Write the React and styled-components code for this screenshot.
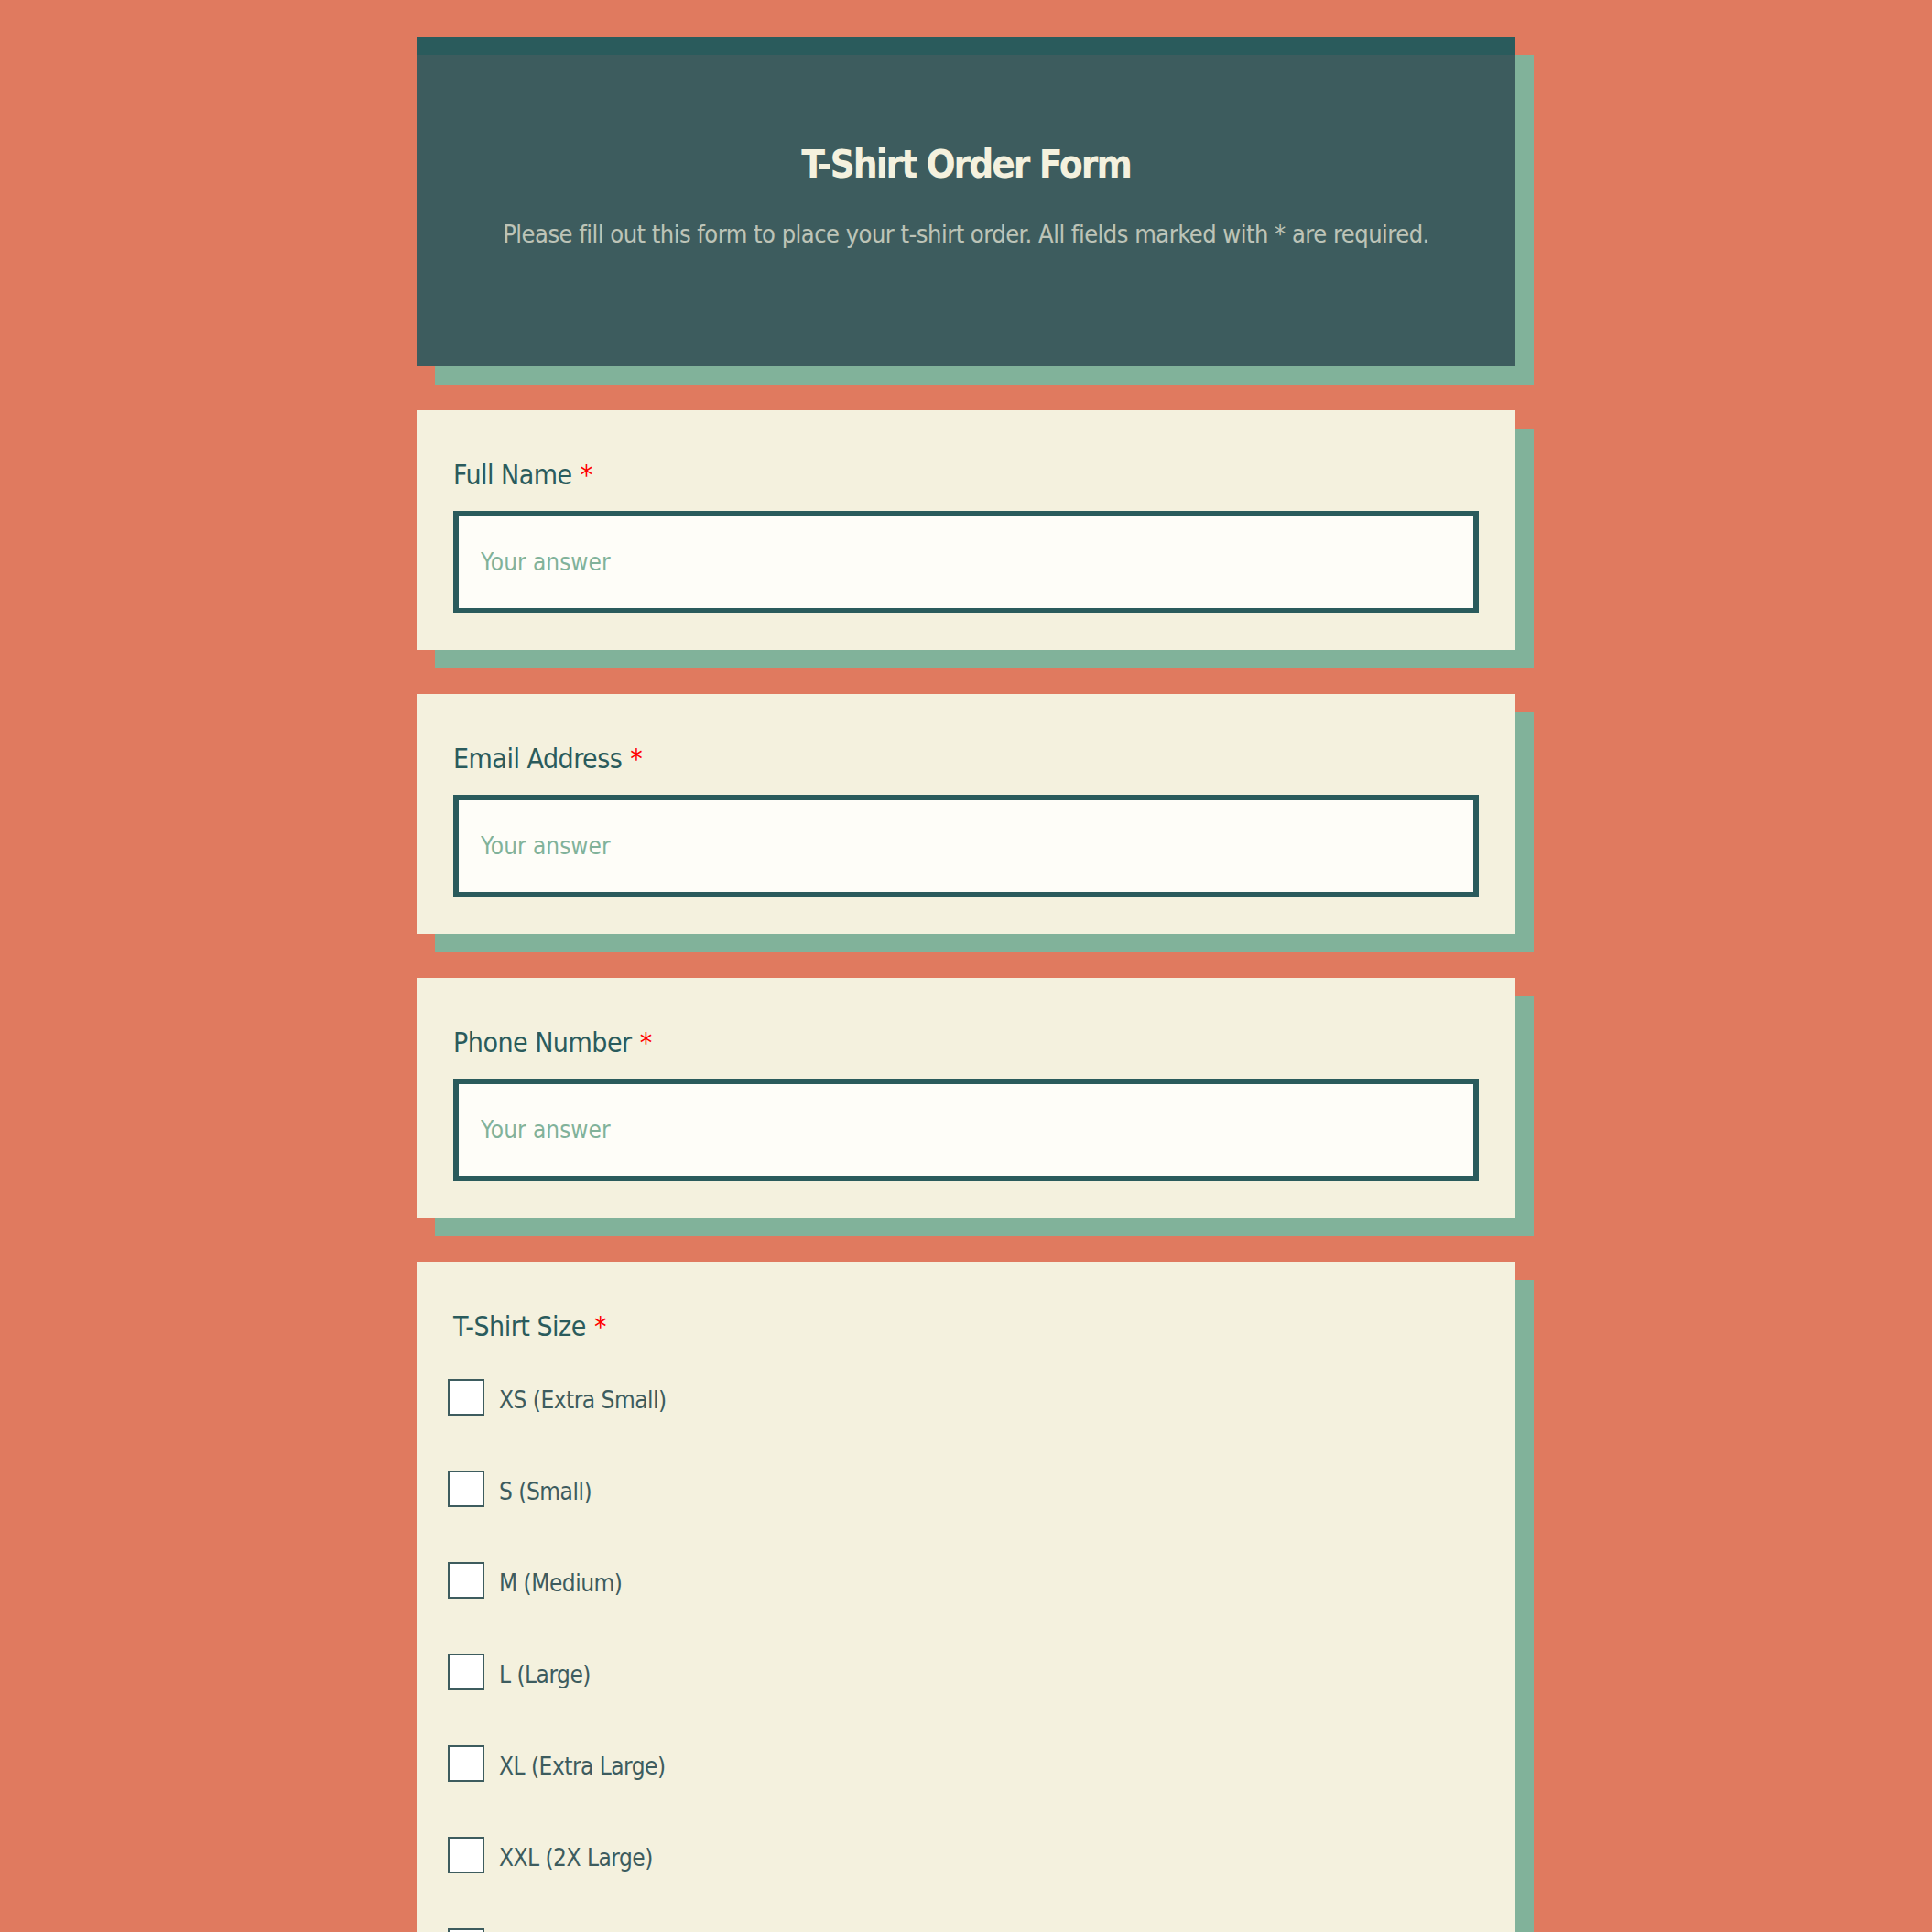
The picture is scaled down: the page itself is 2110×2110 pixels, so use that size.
import React, { useState } from "react";
import styled, { createGlobalStyle } from "styled-components";

const GlobalStyle = createGlobalStyle`
    body {
        margin:0;
        background-color:#e07a5f;
        font-family:"Liberation Sans Narrow", "DejaVu Sans Condensed", "DejaVu Sans", sans-serif;
    }
    * {
        box-sizing:border-box;
    }
`

const Page = styled.div`
    padding:40px 0 80px;
`

const Container = styled.div`
    display:flex;
    flex-direction:column;
    gap:48px;

    width:1200px;
    margin:0 auto;
`

const Header = styled.header`
    height:360px;
    padding:95px 40px 0;

    text-align:center;
    background-color:#3d5c5e;
    border-top:20px solid #2a5b5c;
    box-shadow:20px 20px 0 #81b29a;
`

const Title = styled.h1`
    margin:0;

    font-size:42px;
    line-height:1.2;
    font-weight:700;
    letter-spacing:-2px;
    color:#f4f1de;
`

const SubText = styled.p`
    margin:33px 0 0;

    font-size:27px;
    line-height:1.3;
    letter-spacing:-0.5px;
    white-space:nowrap;
    color:#f4f1de;
    opacity:0.7;
`

const Card = styled.section`
    padding:47px 40px 40px;

    background-color:#f4f1de;
    box-shadow:20px 20px 0 #81b29a;
`

const Label = styled.label`
    display:block;

    font-size:30px;
    line-height:48px;
    letter-spacing:-0.5px;
    color:#2a5b5c;
`

const Star = styled.span`
    margin-left:9px;
    color:#ff0000;
`

const Input = styled.input`
    display:block;
    width:100%;
    height:112px;
    margin-top:15px;
    padding:0 24px;

    font-family:inherit;
    font-size:26px;
    color:#2a5b5c;
    background-color:#fefdf8;
    border:6px solid #2a5b5c;
    border-radius:0;
    outline:none;

    &::placeholder {
        color:#81b29a;
    }
`

const OptionList = styled.div`
    display:flex;
    flex-direction:column;
    gap:60px;

    margin:33px 0 0 -6px;
`

const Option = styled.label`
    display:flex;
    align-items:flex-start;
    gap:16px;
    height:40px;

    font-size:26px;
    line-height:40px;
    letter-spacing:-0.5px;
    color:#3d5c5e;
    cursor:pointer;
`

const Box = styled.span`
    flex-shrink:0;

    width:40px;
    height:40px;

    background-color:${(props) => (props.checked ? "#3d5c5e" : "#ffffff")};
    border:2px solid #3d5c5e;
`

const OptionText = styled.span`
    padding-top:3px;
`

const HiddenCheck = styled.input`
    display:none;
`

const sizes = [
    "XS (Extra Small)",
    "S (Small)",
    "M (Medium)",
    "L (Large)",
    "XL (Extra Large)",
    "XXL (2X Large)",
    "XXXL (3X Large)",
];

function TextField({ label, type }) {
    return (
        <Card>
            <Label>
                {label}<Star>*</Star>
            </Label>
            <Input type={type} placeholder="Your answer" />
        </Card>
    )
}

function App() {

    const [picked, setPicked] = useState([]);

    const toggle = (size) => {
        return () => {
            setPicked(picked.includes(size) ? picked.filter((s) => s !== size) : [...picked, size]);
        };
    };

    return (
        <Page>
            <GlobalStyle />
            <Container>
                <Header>
                    <Title>T-Shirt Order Form</Title>
                    <SubText>Please fill out this form to place your t-shirt order. All fields marked with * are required.</SubText>
                </Header>

                <TextField label="Full Name" type="text" />
                <TextField label="Email Address" type="email" />
                <TextField label="Phone Number" type="tel" />

                <Card>
                    <Label>
                        T-Shirt Size<Star>*</Star>
                    </Label>
                    <OptionList>
                        {sizes.map((size) => (
                            <Option key={size}>
                                <HiddenCheck type="checkbox" checked={picked.includes(size)} onChange={toggle(size)} />
                                <Box checked={picked.includes(size)} />
                                <OptionText>{size}</OptionText>
                            </Option>
                        ))}
                    </OptionList>
                </Card>
            </Container>
        </Page>
    )
}

export default App;
